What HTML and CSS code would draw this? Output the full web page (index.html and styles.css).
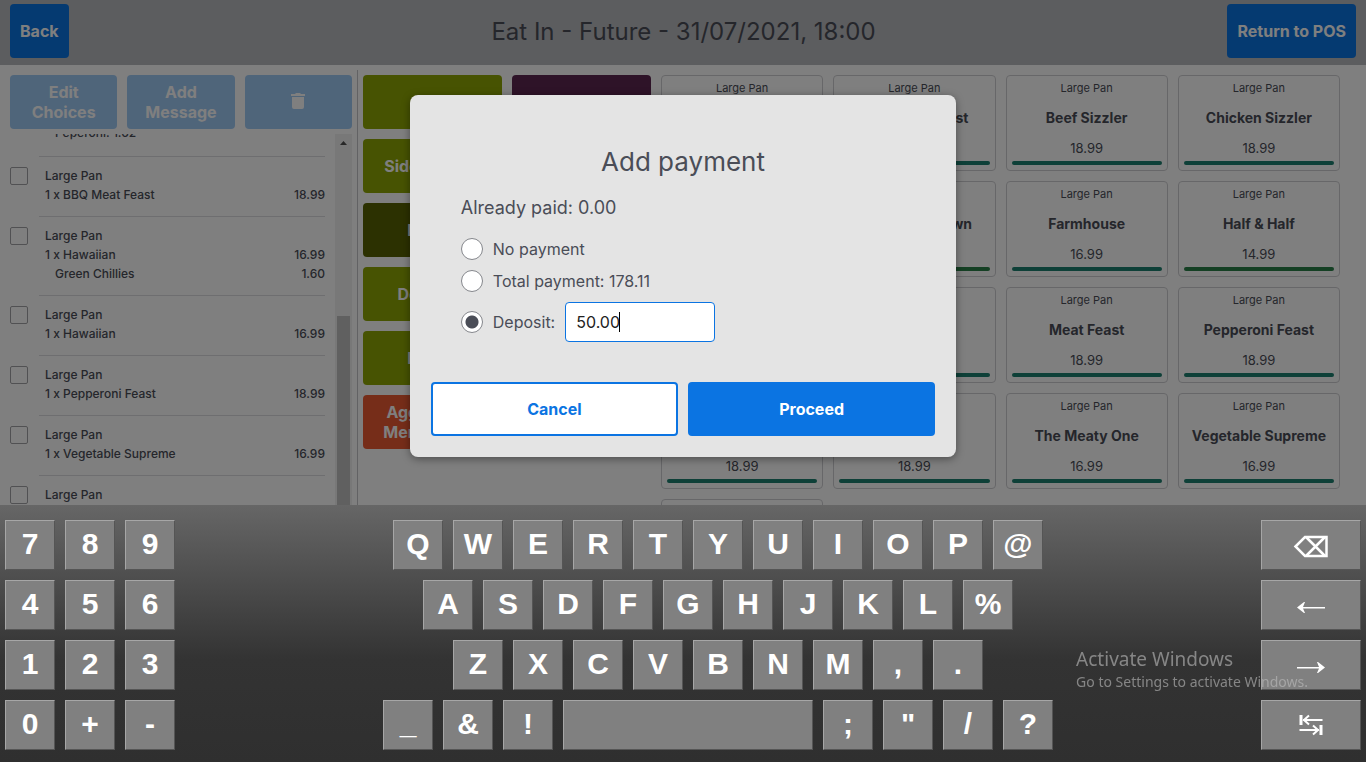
FILE: index.html
```html
<!DOCTYPE html>
<html lang="en">
<head>
    <meta charset="UTF-8">
    <meta name="viewport" content="width=device-width, initial-scale=1.0">
    <title>Add payment</title>
    <link rel="stylesheet" href="styles.css">
</head>
<body>
    <div class="app">
        <header class="topbar">
            <button class="btn">Back</button>
            <h1>Eat In - Future - 31/07/2021, 18:00</h1>
            <button class="btn">Return to POS</button>
        </header>

        <main class="till">
            <section class="order">
                <div class="order-actions">
                    <button class="btn" disabled>Edit Choices</button>
                    <button class="btn" disabled>Add Message</button>
                    <button class="btn" disabled aria-label="Delete">
                        <svg width="14" height="20" viewBox="0 0 14 20" fill="currentColor"><path d="M0 4h4l1-1h4l1 1h4v2H0zM1 7h12v10a2 2 0 0 1-2 2H3a2 2 0 0 1-2-2z"/></svg>
                    </button>
                </div>
                <div class="order-scroll">
                    <div class="order-list">
                        <div class="item first">
                            <div class="line extra"><span>Peperoni: 1.62</span></div>
                        </div>
                        <div class="item">
                            <input type="checkbox" id="item1">
                            <label for="item1">Large Pan</label>
                            <div class="line"><span>1 x BBQ Meat Feast</span><span>18.99</span></div>
                        </div>
                        <div class="item">
                            <input type="checkbox" id="item2">
                            <label for="item2">Large Pan</label>
                            <div class="line"><span>1 x Hawaiian</span><span>16.99</span></div>
                            <div class="line extra"><span>Green Chillies</span><span>1.60</span></div>
                        </div>
                        <div class="item">
                            <input type="checkbox" id="item3">
                            <label for="item3">Large Pan</label>
                            <div class="line"><span>1 x Hawaiian</span><span>16.99</span></div>
                        </div>
                        <div class="item">
                            <input type="checkbox" id="item4">
                            <label for="item4">Large Pan</label>
                            <div class="line"><span>1 x Pepperoni Feast</span><span>18.99</span></div>
                        </div>
                        <div class="item">
                            <input type="checkbox" id="item5">
                            <label for="item5">Large Pan</label>
                            <div class="line"><span>1 x Vegetable Supreme</span><span>16.99</span></div>
                        </div>
                        <div class="item">
                            <input type="checkbox" id="item6">
                            <label for="item6">Large Pan</label>
                        </div>
                    </div>
                    <div class="scrollbar">
                        <svg width="7" height="4" viewBox="0 0 7 4"><path d="M0 4L3.5 0L7 4z" fill="#505050"/></svg>
                        <div class="thumb"></div>
                    </div>
                </div>
            </section>

            <nav class="categories">
                <button class="btn olive"></button>
                <button class="btn plum"></button>
                <button class="btn olive">Sides &amp; Dips</button>
                <span></span>
                <button class="btn moss">Drinks</button>
                <span></span>
                <button class="btn olive">Desserts</button>
                <span></span>
                <button class="btn olive">Drinks</button>
                <span></span>
                <button class="btn rust">Aggregated Membership</button>
            </nav>

            <section class="products">
                <button class="product"><small>Large Pan</small><b></b><span></span></button>
                <button class="product"><small>Large Pan</small><b>BBQ Meat Feast</b><span>18.99</span></button>
                <button class="product"><small>Large Pan</small><b>Beef Sizzler</b><span>18.99</span></button>
                <button class="product"><small>Large Pan</small><b>Chicken Sizzler</b><span>18.99</span></button>
                <button class="product"><small></small><b></b><span></span></button>
                <button class="product green"><small></small><b>Create Your Own</b><span></span></button>
                <button class="product"><small>Large Pan</small><b>Farmhouse</b><span>16.99</span></button>
                <button class="product green"><small>Large Pan</small><b>Half &amp; Half</b><span>14.99</span></button>
                <button class="product"><small></small><b></b><span></span></button>
                <button class="product"><small></small><b></b><span></span></button>
                <button class="product"><small>Large Pan</small><b>Meat Feast</b><span>18.99</span></button>
                <button class="product"><small>Large Pan</small><b>Pepperoni Feast</b><span>18.99</span></button>
                <button class="product"><small></small><b></b><span>18.99</span></button>
                <button class="product"><small></small><b></b><span>18.99</span></button>
                <button class="product"><small>Large Pan</small><b>The Meaty One</b><span>16.99</span></button>
                <button class="product"><small>Large Pan</small><b>Vegetable Supreme</b><span>16.99</span></button>
                <button class="product"><small></small><b></b><span></span></button>
            </section>
        </main>

        <div class="overlay">
            <form class="modal" role="dialog" aria-labelledby="modalTitle">
                <h2 id="modalTitle">Add payment</h2>
                <div class="fields">
                    <p>Already paid: 0.00</p>
                    <div class="option">
                        <input type="radio" name="payment" id="payNone">
                        <label for="payNone">No payment</label>
                    </div>
                    <div class="option">
                        <input type="radio" name="payment" id="payTotal">
                        <label for="payTotal">Total payment: 178.11</label>
                    </div>
                    <div class="option deposit">
                        <input type="radio" name="payment" id="payDeposit" checked>
                        <label for="payDeposit">Deposit:</label>
                        <div class="amount">
                            <input type="text" value="50.00" aria-label="Deposit amount">
                            <i class="caret"></i>
                        </div>
                    </div>
                </div>
                <div class="modal-actions">
                    <button type="button" class="btn outline">Cancel</button>
                    <button type="button" class="btn">Proceed</button>
                </div>
            </form>
        </div>
    </div>

    <div class="keyboard">
        <div class="keys">
            <div class="row"><button>7</button><button>8</button><button>9</button></div>
            <div class="row"><button>4</button><button>5</button><button>6</button></div>
            <div class="row"><button>1</button><button>2</button><button>3</button></div>
            <div class="row"><button>0</button><button>+</button><button>-</button></div>
        </div>
        <div class="keys">
            <div class="row"><button>Q</button><button>W</button><button>E</button><button>R</button><button>T</button><button>Y</button><button>U</button><button>I</button><button>O</button><button>P</button><button>@</button></div>
            <div class="row"><button>A</button><button>S</button><button>D</button><button>F</button><button>G</button><button>H</button><button>J</button><button>K</button><button>L</button><button>%</button></div>
            <div class="row"><button>Z</button><button>X</button><button>C</button><button>V</button><button>B</button><button>N</button><button>M</button><button>,</button><button>.</button></div>
            <div class="row"><button>_</button><button>&amp;</button><button>!</button><button class="space" aria-label="Space"></button><button>;</button><button>"</button><button>/</button><button>?</button></div>
        </div>
        <div class="keys side">
            <div class="row">
                <button aria-label="Backspace">
                    <svg width="36" height="30" viewBox="0 0 36 30" fill="none" stroke="#fff" stroke-width="2.5"><path d="M2.500 16.500L12 7H33.500V26H12z"/><path d="M13 7L32 26M32 7L13 26"/></svg>
                </button>
            </div>
            <div class="row">
                <button aria-label="Left">
                    <svg width="30" height="30" viewBox="0 0 30 30" fill="#fff"><path d="M1 17.500L8 12h1L7 17h22v1.500H7L9 23H8z"/></svg>
                </button>
            </div>
            <div class="row">
                <button aria-label="Right">
                    <svg width="30" height="30" viewBox="0 0 30 30" fill="#fff"><path d="M29 17.500L22 12h-1l2 5H1v1.500h22L21 23h1z"/></svg>
                </button>
            </div>
            <div class="row">
                <button aria-label="Tab">
                    <svg width="24" height="30" viewBox="0 0 24 30" fill="none" stroke="#fff" stroke-width="2"><path d="M1.500 5v10M2.500 5v10M23.500 10H4M10 5.500L5 10l5 4.500M21.500 15v10M22.500 15v10M.5 20H20M14 15.500l5 4.500-5 4.500"/></svg>
                </button>
            </div>
        </div>
    </div>

    <div class="watermark">
        <strong>Activate Windows</strong>
        <span>Go to Settings to activate Windows.</span>
    </div>
</body>
</html>
```

FILE: styles.css
```css
* {
    box-sizing: border-box;
}
body {
    margin: 0;
    height: 100vh;
    display: flex;
    flex-direction: column;
    overflow: hidden;
    font-family: Inter, sans-serif;
    color: #4a4d57;
}
button, input {
    font-family: inherit;
    margin: 0;
}
.app {
    flex: 1;
    min-height: 0;
    display: flex;
    flex-direction: column;
    position: relative;
    background-color: #fff;
}

/* buttons */
.btn {
    height: 54px;
    padding: 0 10px;
    border: none;
    border-radius: 4px;
    background-color: #0b74e2;
    color: #fff;
    font-size: 16px;
    font-weight: 700;
    line-height: 20px;
}
.btn.outline {
    background-color: #fff;
    border: 2px solid #0b74e2;
    color: #0b74e2;
}
.btn.olive { background-color: #8ea604; }
.btn.plum { background-color: #5c2751; }
.btn.moss { background-color: #586203; }
.btn.rust { background-color: #ec5a33; }

/* header */
.topbar {
    height: 65px;
    display: flex;
    align-items: center;
    justify-content: space-between;
    padding: 0 10px 3px;
    background-color: #b9babf;
}
.topbar h1 {
    margin: 0;
    flex: 1;
    text-align: center;
    font-size: 24px;
    font-weight: 400;
}
.topbar .btn:first-child {
    margin-right: 71px;
}

.till {
    flex: 1;
    min-height: 0;
    display: grid;
    grid-template-columns: 358fr 303fr 705fr;
}

/* order panel */
.order {
    display: flex;
    flex-direction: column;
    min-height: 0;
    margin-top: 5px;
    padding: 5px 5px 0 10px;
    border-right: 1px solid #c4c4c8;
}
.order-actions {
    display: grid;
    grid-template-columns: repeat(3, 1fr);
    gap: 10px;
}
.order-actions .btn {
    background-color: #9fcaf5;
    color: #fff;
}
.order-scroll {
    flex: 1;
    min-height: 0;
    display: flex;
    margin-top: 5px;
    overflow: hidden;
}
.order-list {
    flex: 1;
    margin-right: 10px;
    font-size: 12px;
    font-weight: 500;
    line-height: 19px;
}
.item {
    position: relative;
    margin-left: 29px;
    padding: 9px 0 12px 6px;
    border-top: 1px solid #dcdce0;
}
.item.first {
    margin-top: -21px;
    padding-bottom: 14px;
}
.item input {
    appearance: none;
    position: absolute;
    top: 10px;
    left: -29px;
    width: 18px;
    height: 18px;
    border: 1px solid #a2a2a6;
    border-radius: 2px;
}
.item label {
    display: block;
}
.line {
    display: flex;
    justify-content: space-between;
}
.line.extra span:first-child {
    padding-left: 10px;
}
.scrollbar {
    width: 17px;
    padding: 7px 2px 0;
    display: flex;
    flex-direction: column;
    align-items: center;
    background-color: #f1f1f1;
}
.thumb {
    flex: 1;
    width: 13px;
    margin-top: 171px;
    background-color: #c1c1c1;
}

/* menu */
.categories {
    display: grid;
    grid-template-columns: 1fr 1fr;
    gap: 10px;
    align-content: start;
    padding: 10px 10px 0 5px;
}
.products {
    display: grid;
    grid-template-columns: repeat(4, 1fr);
    grid-auto-rows: 96px;
    gap: 10px;
    padding: 10px 26px 0 0;
    overflow: hidden;
}
.product {
    display: flex;
    flex-direction: column;
    align-items: center;
    padding: 5px;
    border: 1px solid #cfcfd2;
    border-radius: 4px;
    background-color: #fff;
    color: #4a4d57;
}
.product small {
    height: 14px;
    font-size: 11px;
    line-height: 14px;
}
.product b {
    height: 46px;
    font-size: 14px;
    font-weight: 700;
    line-height: 46px;
}
.product span {
    height: 14px;
    font-size: 13px;
    line-height: 14px;
}
.product::after {
    content: "";
    width: 100%;
    height: 4px;
    margin-top: 6px;
    border-radius: 2px;
    background-color: #1d8070;
}
.product.green::after {
    background-color: #2a8049;
}

/* payment modal */
.overlay {
    position: absolute;
    inset: 0;
    display: flex;
    justify-content: center;
    align-items: flex-start;
    padding-top: 95px;
    background-color: rgba(0, 0, 0, 0.5);
}
.modal {
    width: 40%;
    padding: 50px 21px 21px;
    border-radius: 8px;
    background-color: #e4e4e4;
    box-shadow: 0 2px 8px rgba(0, 0, 0, 0.4);
}
.modal h2 {
    margin: 0 0 18px;
    text-align: center;
    font-size: 26px;
    font-weight: 400;
    line-height: 34px;
}
.fields {
    padding: 0 30px;
}
.fields p {
    margin: 0 0 19px;
    font-size: 18px;
    line-height: 22px;
}
.option {
    display: flex;
    align-items: center;
    gap: 10px;
    margin-bottom: 10px;
    font-size: 16px;
    line-height: 22px;
}
.option input[type="radio"] {
    appearance: none;
    width: 22px;
    height: 22px;
    border: 1px solid #85878c;
    border-radius: 50%;
    background-color: #fff;
}
.option input[type="radio"]:checked {
    background-image: radial-gradient(circle, #4a4d57 6px, transparent 7px);
}
.option.deposit {
    margin-bottom: 40px;
}
.amount {
    position: relative;
}
.amount input {
    display: block;
    width: 150px;
    height: 40px;
    padding: 0 10px;
    border: 1px solid #0b74e2;
    border-radius: 4px;
    background-color: #fff;
    color: #222;
    font-size: 16px;
}
.caret {
    position: absolute;
    top: 10px;
    left: 54px;
    width: 1px;
    height: 20px;
    background-color: #000;
}
.modal-actions {
    display: grid;
    grid-template-columns: 1fr 1fr;
    gap: 10px;
}

/* on-screen keyboard */
.keyboard {
    display: flex;
    justify-content: space-between;
    padding: 15px 5px 12px;
    background: linear-gradient(#666, #333 60%, #2f2f2f);
}
.keys {
    display: flex;
    flex-direction: column;
    gap: 10px;
}
.row {
    display: flex;
    justify-content: center;
    gap: 10px;
}
.row button {
    display: flex;
    align-items: center;
    justify-content: center;
    width: 50px;
    height: 50px;
    padding: 0 0 2px;
    border: 1px solid;
    border-color: #a6a6a6 #555 #555 #a6a6a6;
    background-color: #808080;
    color: #fff;
    font: bold 30px/46px "Liberation Sans", Arial, sans-serif;
}
.row .space {
    width: 250px;
}
.side .row button {
    width: 100px;
    padding: 0;
}

.watermark {
    position: fixed;
    right: 58px;
    bottom: 70px;
    display: flex;
    flex-direction: column;
    color: rgba(190, 190, 190, 0.6);
    font-family: "Noto Sans", sans-serif;
    font-size: 14px;
    line-height: 20px;
    pointer-events: none;
}
.watermark strong {
    font-size: 19px;
    font-weight: 400;
    line-height: 26px;
}
```
